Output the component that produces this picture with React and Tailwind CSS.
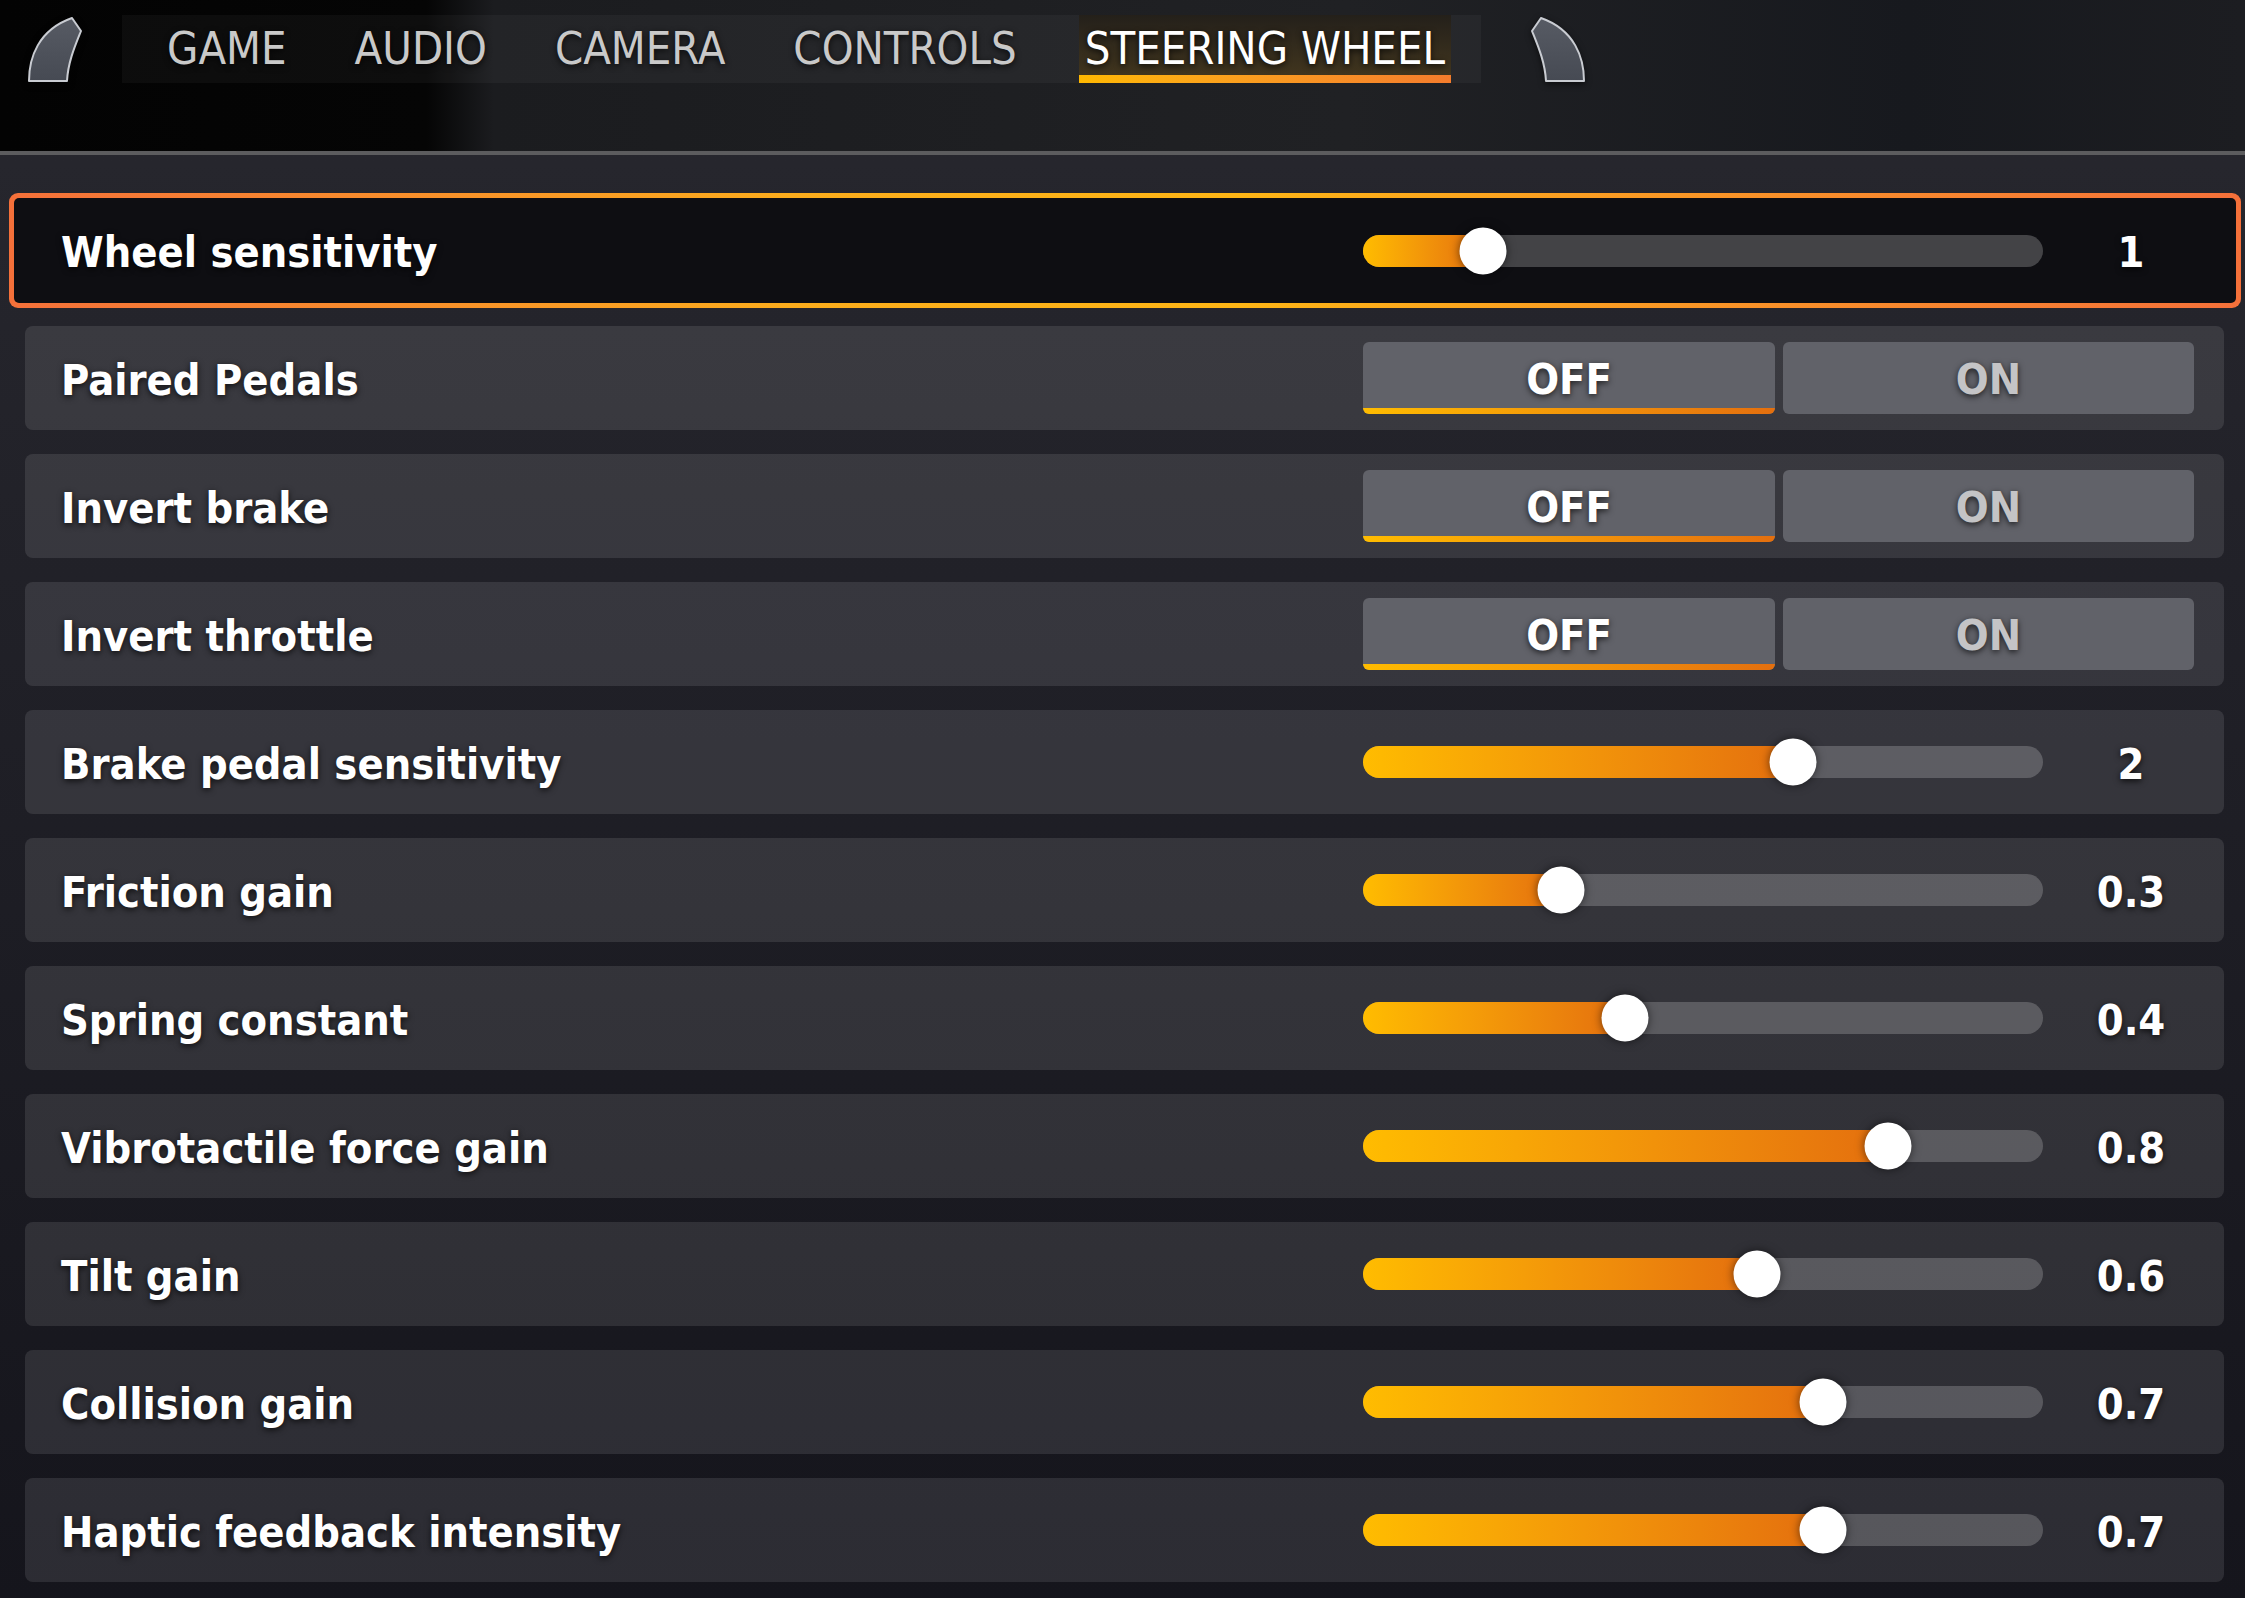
import React from "react";

const rows = [
  { label: "Wheel sensitivity", type: "slider", pos: 0.176, value: "1", selected: true },
  { label: "Paired Pedals", type: "toggle" },
  { label: "Invert brake", type: "toggle" },
  { label: "Invert throttle", type: "toggle" },
  { label: "Brake pedal sensitivity", type: "slider", pos: 0.632, value: "2" },
  { label: "Friction gain", type: "slider", pos: 0.291, value: "0.3" },
  { label: "Spring constant", type: "slider", pos: 0.385, value: "0.4" },
  { label: "Vibrotactile force gain", type: "slider", pos: 0.772, value: "0.8" },
  { label: "Tilt gain", type: "slider", pos: 0.579, value: "0.6" },
  { label: "Collision gain", type: "slider", pos: 0.676, value: "0.7" },
  { label: "Haptic feedback intensity", type: "slider", pos: 0.676, value: "0.7" },
];

const tabs = ["GAME", "AUDIO", "CAMERA", "CONTROLS", "STEERING WHEEL"];

function Bumper({ flip }) {
  return (
    <svg
      width="56"
      height="67"
      viewBox="0 0 56 67"
      className={flip ? "-scale-x-100 drop-shadow-[0_2px_3px_rgba(0,0,0,0.6)]" : "drop-shadow-[0_2px_3px_rgba(0,0,0,0.6)]"}
    >
      <defs>
        <linearGradient id={flip ? "bg2" : "bg1"} x1="0" y1="0" x2="0" y2="1">
          <stop offset="0" stopColor="#575b64" />
          <stop offset="1" stopColor="#464a53" />
        </linearGradient>
      </defs>
      <path
        d="M2 65 C2 42 11 14 45 2 L54 15 C48 30 41 46 40 65 Z"
        fill={flip ? "url(#bg2)" : "url(#bg1)"}
        stroke="#c9ccd2"
        strokeWidth="2"
        strokeLinejoin="round"
      />
    </svg>
  );
}

function Slider({ pos, selected }) {
  return (
    <div
      className={
        selected
          ? "relative w-[680px] h-[32px] rounded-full bg-[#434346]"
          : "relative w-[680px] h-[32px] rounded-full bg-white/20"
      }
    >
      <div
        className="absolute left-0 top-0 h-full rounded-l-full bg-linear-to-r from-[#ffbc00] to-[#e46f0e]"
        style={{ width: `${pos * 100}%` }}
      />
      <div
        className="absolute top-1/2 -translate-y-1/2 -translate-x-1/2 w-[47px] h-[47px] rounded-full bg-white shadow-[0_0_10px_rgba(0,0,0,0.55)]"
        style={{ left: `${pos * 100}%` }}
      />
    </div>
  );
}

function Toggle() {
  return (
    <div className="flex gap-[8px] pr-[25px]">
      <div className="relative w-[412px] h-[72px] rounded-[6px] bg-[#616269] overflow-hidden flex items-center justify-center">
        <span className="text-white text-[43px] font-bold leading-none pt-[2px] [text-shadow:0_2px_6px_rgba(0,0,0,0.7)]">
          OFF
        </span>
        <div className="absolute left-0 right-0 bottom-0 h-[6px] bg-linear-to-r from-[#ffbc00] to-[#e46f0e]" />
      </div>
      <div className="w-[411px] h-[72px] rounded-[6px] bg-[#616269] flex items-center justify-center">
        <span className="text-[#c4c4c6] text-[43px] font-bold leading-none pt-[2px] [text-shadow:0_2px_6px_rgba(0,0,0,0.7)]">
          ON
        </span>
      </div>
    </div>
  );
}

function RowContent({ row }) {
  return (
    <>
      <div className="flex-1 text-white text-[43px] font-bold leading-none pt-[4px] [text-shadow:0_2px_6px_rgba(0,0,0,0.75)]">
        {row.label}
      </div>
      {row.type === "toggle" ? (
        <Toggle />
      ) : (
        <div className="flex items-center">
          <Slider pos={row.pos} selected={row.selected} />
          <div className="w-[176px] text-center text-white text-[43px] font-bold leading-none pt-[4px] [text-shadow:0_2px_6px_rgba(0,0,0,0.75)]">
            {row.value}
          </div>
        </div>
      )}
    </>
  );
}

function Row({ row }) {
  if (row.selected) {
    return (
      <div className="-ml-[16px] -mr-[17px] h-[115px] rounded-[9px] p-[5px] bg-[linear-gradient(90deg,#f4703a_0%,#fbac1c_35%,#fdb515_55%,#f4703a_100%)]">
        <div className="h-full rounded-[5px] bg-[#0e0e12] flex items-center pl-[47px] pr-[17px]">
          <RowContent row={row} />
        </div>
      </div>
    );
  }
  return (
    <div className="h-[104px] rounded-[8px] bg-white/10 flex items-center pl-[36px] pr-[5px]">
      <RowContent row={row} />
    </div>
  );
}

export default function App() {
  return (
    <div className="w-[2245px] h-[1598px] overflow-hidden bg-linear-to-b from-[#28282f] to-[#15151c] font-['DejaVu_Sans_Condensed','DejaVu_Sans',sans-serif] [font-stretch:condensed]">
      {/* Header */}
      <div className="h-[151px] bg-[linear-gradient(90deg,#030303_0%,#050505_19%,#1b1c1f_22%,#202124_60%,#17191e_85%,#1c1d21_100%)] flex items-start pt-[15px]">
        <div className="ml-[27px] mt-[1px]">
          <Bumper />
        </div>
        <div className="ml-[39px] h-[68px] flex gap-[56px] pl-[39px] pr-[30px] bg-white/[0.035]">
          {tabs.map((t, i) => {
            const active = i === tabs.length - 1;
            return (
              <div
                key={t}
                className={
                  active
                    ? "relative h-full px-[6px] flex flex-col bg-linear-to-b from-[#24201a] to-[#45381e]"
                    : "relative h-full px-[6px] flex flex-col"
                }
              >
                <div
                  className={
                    active
                      ? "h-[60px] flex items-center text-white text-[45px] leading-none pt-[6px] [text-shadow:0_2px_6px_rgba(0,0,0,0.8)]"
                      : "h-[60px] flex items-center text-[#c9c9c9] text-[45px] leading-none pt-[6px] [text-shadow:0_2px_6px_rgba(0,0,0,0.8)]"
                  }
                >
                  {t}
                </div>
                {active ? (
                  <div className="absolute left-0 right-0 bottom-0 h-[8px] bg-linear-to-r from-[#ffb800] to-[#f47c2c]" />
                ) : null}
              </div>
            );
          })}
        </div>
        <div className="ml-[49px] mt-[1px]">
          <Bumper flip />
        </div>
      </div>
      <div className="h-[4px] bg-[#5c5c5e]" />
      {/* List */}
      <div className="pl-[25px] pr-[21px] pt-[38px] flex flex-col">
        {rows.map((r, i) => (
          <div key={r.label} className={i === 0 ? "" : i === 1 ? "mt-[18px]" : "mt-[24px]"}>
            <Row row={r} />
          </div>
        ))}
      </div>
    </div>
  );
}
